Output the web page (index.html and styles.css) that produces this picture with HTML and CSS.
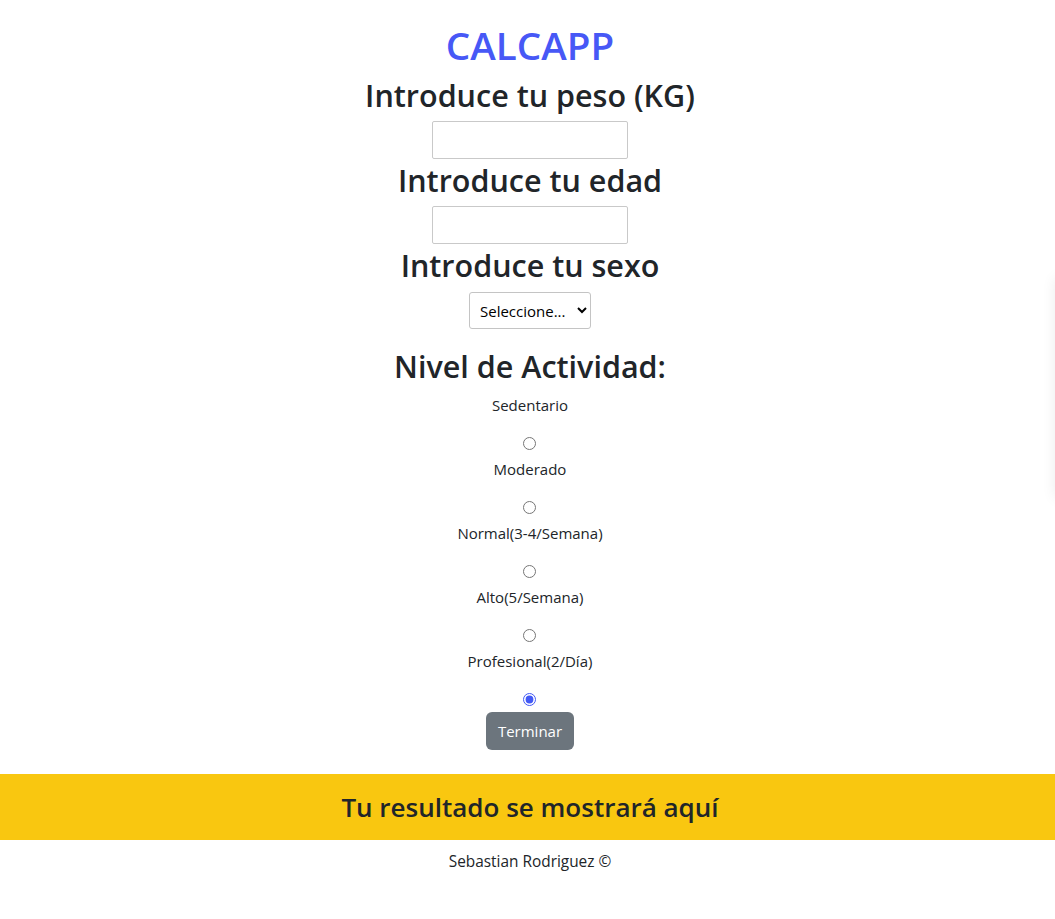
FILE: index.html
```html
<!DOCTYPE html>
<html lang="es">
<head>
<meta charset="utf-8">
<title>CALCAPP</title>
<link rel="stylesheet" href="styles.css">
</head>
<body>
<main class="app">
  <h1 class="title">CALCAPP</h1>
  <h2 class="heading">Introduce tu peso (KG)</h2>
  <input class="field" type="text">
  <h2 class="heading">Introduce tu edad</h2>
  <input class="field" type="text">
  <h2 class="heading">Introduce tu sexo</h2>
  <select class="picker">
    <option>Seleccione...</option>
    <option>Hombre</option>
    <option>Mujer</option>
  </select>
  <h2 class="heading heading-activity">Nivel de Actividad:</h2>
  <div class="levels">
    <label class="level"><span class="level-name">Sedentario</span><input class="level-radio" type="radio" name="nivel"></label>
    <label class="level"><span class="level-name">Moderado</span><input class="level-radio" type="radio" name="nivel"></label>
    <label class="level"><span class="level-name">Normal(3-4/Semana)</span><input class="level-radio" type="radio" name="nivel"></label>
    <label class="level"><span class="level-name">Alto(5/Semana)</span><input class="level-radio" type="radio" name="nivel"></label>
    <label class="level"><span class="level-name">Profesional(2/Día)</span><input class="level-radio" type="radio" name="nivel" checked></label>
  </div>
  <button class="btn" type="button">Terminar</button>
</main>
<section class="result">
  <h3 class="result-text">Tu resultado se mostrará aquí</h3>
</section>
<footer class="footer">Sebastian Rodriguez ©</footer>
<div class="side-panel"></div>
</body>
</html>
```

FILE: styles.css
```css
html, body {
  margin: 0;
  padding: 0;
}
body {
  padding-left: 5px;
  overflow-x: hidden;
  font-family: "Open Sans", "Noto Sans", sans-serif;
  color: #212529;
  background: #fff;
  font-size: 16px;
  line-height: 1.5;
}
.app {
  display: flex;
  flex-direction: column;
  align-items: center;
  text-align: center;
  padding-top: 21px;
}
.title {
  margin: 0 0 7px;
  font-size: 38.6px;
  line-height: 48px;
  font-weight: 600;
  color: #4758f6;
}
.heading {
  margin: 0;
  font-size: 30.5px;
  line-height: 38px;
  font-weight: 600;
}
.field {
  box-sizing: border-box;
  width: 196px;
  height: 38px;
  margin: 7px 0 1px;
  border: 1px solid #c9c9c9;
  border-radius: 2px;
  font: inherit;
  padding: 0 8px;
}
.field + .heading {
  margin-top: 1px;
}
.picker {
  box-sizing: border-box;
  width: 122px;
  height: 37px;
  margin: 8px 0 18px;
  border: 1px solid #c4c4c4;
  border-radius: 3px;
  background: #fff;
  color: #000;
  font-family: inherit;
  font-size: 15px;
  padding: 0 6px;
}
.heading-activity {
  margin-bottom: 8px;
}
.levels {
  display: flex;
  flex-direction: column;
  align-items: center;
}
.level {
  display: flex;
  flex-direction: column;
  align-items: center;
}
.level-name {
  font-size: 15px;
  line-height: 24px;
}
.level-radio {
  width: 13px;
  height: 13px;
  margin: 20px 0 7px;
  accent-color: #4259f5;
}
.level:last-child .level-radio {
  margin-bottom: 6px;
}
.btn {
  box-sizing: border-box;
  width: 88px;
  height: 38px;
  margin: 0 0 24px;
  border: 0;
  border-radius: 6px;
  background: #6c757d;
  color: #fff;
  font-family: inherit;
  font-size: 15px;
}
.result {
  margin-left: -5px;
  background: #f9c710;
  padding: 16px 0;
  text-align: center;
}
.result-text {
  margin: 0;
  padding-left: 5px;
  font-size: 26px;
  line-height: 34px;
  font-weight: 600;
}
.footer {
  text-align: center;
  padding-top: 10px;
  font-size: 15.4px;
  line-height: 24px;
}
.side-panel {
  position: absolute;
  top: 278px;
  right: -30px;
  width: 30px;
  height: 220px;
  box-shadow: 0 0 14px rgba(0, 0, 0, 0.08);
}
```
